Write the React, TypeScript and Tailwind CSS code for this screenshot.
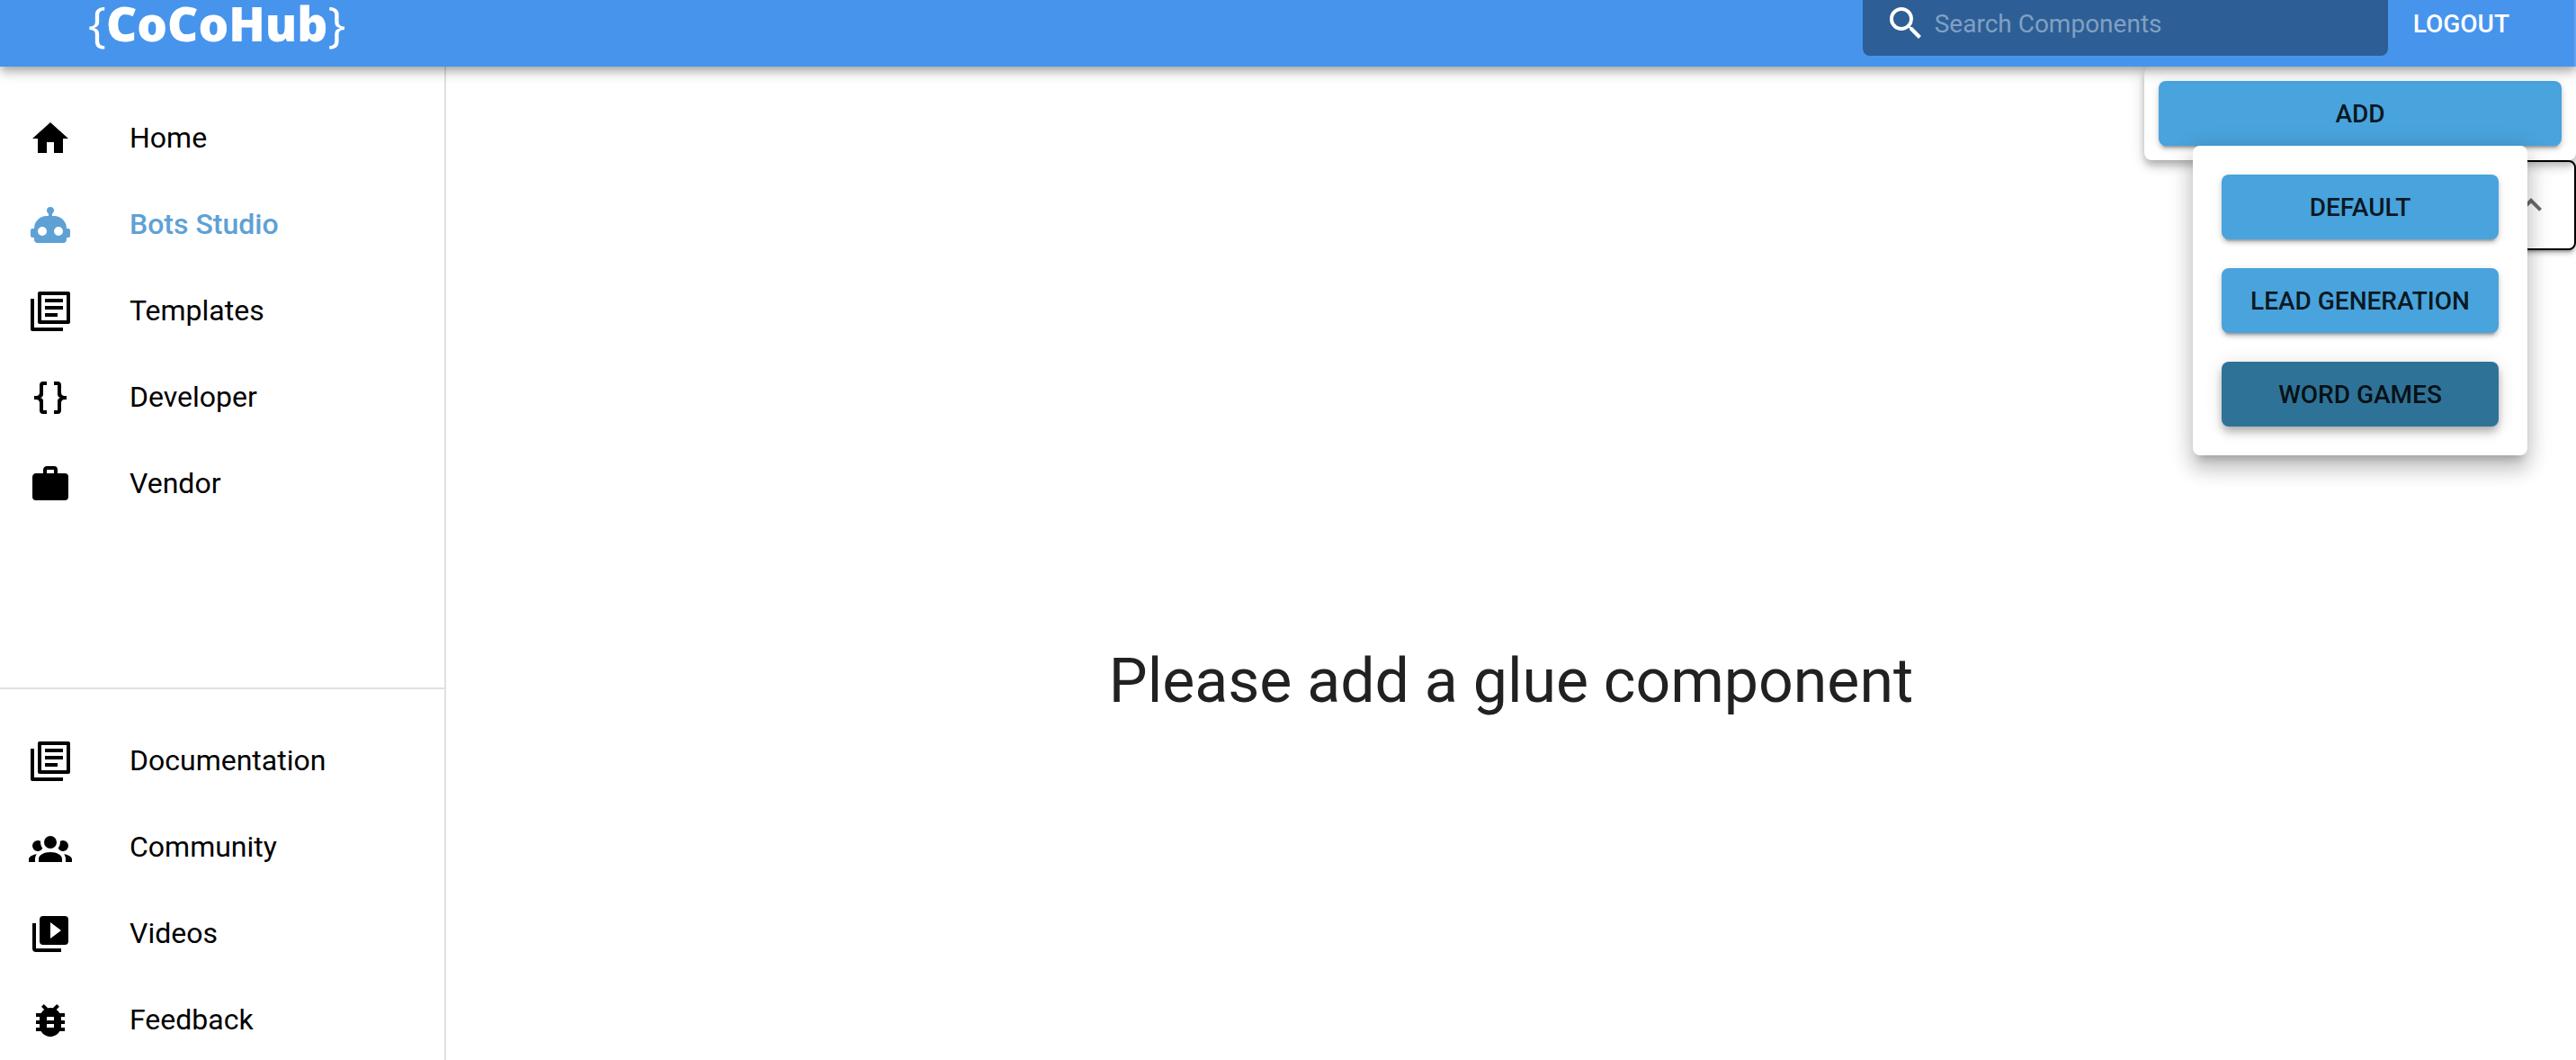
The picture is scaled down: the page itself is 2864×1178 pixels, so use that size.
import { useState } from "react";
import type { ReactNode } from "react";

type Item = { label: string; path: string; active?: boolean };

const paths = {
  home: "M10 20v-6h4v6h5v-8h3L12 3 2 12h3v8z",
  robot:
    "M12 2a2 2 0 0 1 2 2c0 .74-.4 1.39-1 1.73V7h1a7 7 0 0 1 7 7h1a1 1 0 0 1 1 1v3a1 1 0 0 1-1 1h-1v1a2 2 0 0 1-2 2H5a2 2 0 0 1-2-2v-1H2a1 1 0 0 1-1-1v-3a1 1 0 0 1 1-1h1a7 7 0 0 1 7-7h1V5.73c-.6-.34-1-.99-1-1.73a2 2 0 0 1 2-2M7.5 13A2.5 2.5 0 0 0 5 15.5 2.5 2.5 0 0 0 7.5 18a2.5 2.5 0 0 0 2.5-2.5A2.5 2.5 0 0 0 7.5 13m9 0a2.5 2.5 0 0 0-2.5 2.5 2.5 2.5 0 0 0 2.5 2.5 2.5 2.5 0 0 0 2.5-2.5 2.5 2.5 0 0 0-2.5-2.5z",
  pages:
    "M6 1h16a1 1 0 0 1 1 1v16a1 1 0 0 1-1 1H6a1 1 0 0 1-1-1V2a1 1 0 0 1 1-1m1 2v14h14V3H7M9 5h10v2H9V5m0 4h10v2H9V9m0 4h7v2H9v-2M1 5h2v16h16v2H2a1 1 0 0 1-1-1V5z",
  braces:
    "M8 3a2 2 0 0 0-2 2v4a2 2 0 0 1-2 2H3v2h1a2 2 0 0 1 2 2v4a2 2 0 0 0 2 2h2v-2H8v-5a2 2 0 0 0-2-2 2 2 0 0 0 2-2V5h2V3M16 3a2 2 0 0 1 2 2v4a2 2 0 0 0 2 2h1v2h-1a2 2 0 0 0-2 2v4a2 2 0 0 1-2 2h-2v-2h2v-5a2 2 0 0 1 2-2 2 2 0 0 1-2-2V5h-2V3h2z",
  briefcase:
    "M10 2h4a2 2 0 0 1 2 2v2h4a2 2 0 0 1 2 2v11a2 2 0 0 1-2 2H4a2 2 0 0 1-2-2V8c0-1.11.89-2 2-2h4V4c0-1.11.89-2 2-2m4 4V4h-4v2h4z",
  group:
    "M12 5.5A3.5 3.5 0 0 1 15.5 9a3.5 3.5 0 0 1-3.5 3.5A3.5 3.5 0 0 1 8.5 9 3.5 3.5 0 0 1 12 5.5M5 8c.56 0 1.08.15 1.53.42-.15 1.43.27 2.85 1.13 3.96C7.16 13.34 6.16 14 5 14a3 3 0 0 1-3-3 3 3 0 0 1 3-3m14 0a3 3 0 0 1 3 3 3 3 0 0 1-3 3c-1.16 0-2.16-.66-2.66-1.62a5.54 5.54 0 0 0 1.13-3.96c.45-.27.97-.42 1.53-.42M5.5 18.25c0-2.07 2.91-3.75 6.5-3.75s6.5 1.68 6.5 3.75V20h-13v-1.75M0 20v-1.5c0-1.39 1.89-2.56 4.45-2.9-.59.68-.95 1.62-.95 2.65V20H0m24 0h-3.5v-1.75c0-1.03-.36-1.97-.95-2.65 2.56.34 4.45 1.51 4.45 2.9V20z",
  video:
    "M4 6H2v14a2 2 0 0 0 2 2h14v-2H4V6m16-4H8a2 2 0 0 0-2 2v12a2 2 0 0 0 2 2h12a2 2 0 0 0 2-2V4a2 2 0 0 0-2-2m-8 12.5v-9l6 4.5-6 4.5z",
  bug: "M20 8h-2.81a5.985 5.985 0 0 0-1.82-1.96L17 4.41 15.59 3l-2.17 2.17a6.002 6.002 0 0 0-2.83 0L8.41 3 7 4.41l1.62 1.63C7.88 6.55 7.26 7.22 6.81 8H4v2h2.09c-.05.33-.09.66-.09 1v1H4v2h2v1c0 .34.04.67.09 1H4v2h2.81c1.04 1.79 2.97 3 5.19 3s4.15-1.21 5.19-3H20v-2h-2.09c.05-.33.09-.66.09-1v-1h2v-2h-2v-1c0-.34-.04-.67-.09-1H20V8zm-6 8h-4v-2h4v2zm0-4h-4v-2h4v2z",
  search:
    "M15.5 14h-.79l-.28-.27A6.471 6.471 0 0 0 16 9.5 6.5 6.5 0 1 0 9.5 16c1.61 0 3.09-.59 4.23-1.57l.27.28v.79l5 4.99L20.49 19l-4.99-5zm-6 0C7.01 14 5 11.99 5 9.5S7.01 5 9.5 5 14 7.01 14 9.5 11.99 14 9.5 14z",
  chevronUp: "M7.41 15.41 12 10.83l4.59 4.58L18 14l-6-6-6 6z",
};

const mainItems: Item[] = [
  { label: "Home", path: paths.home },
  { label: "Bots Studio", path: paths.robot, active: true },
  { label: "Templates", path: paths.pages },
  { label: "Developer", path: paths.braces },
  { label: "Vendor", path: paths.briefcase },
];

const helpItems: Item[] = [
  { label: "Documentation", path: paths.pages },
  { label: "Community", path: paths.group },
  { label: "Videos", path: paths.video },
  { label: "Feedback", path: paths.bug },
];

const raised =
  "shadow-[0_6px_2px_-4px_rgba(0,0,0,0.2),0_4px_4px_0_rgba(0,0,0,0.14),0_2px_10px_0_rgba(0,0,0,0.12)]";
const lifted =
  "shadow-[0_4px_8px_-2px_rgba(0,0,0,0.2),0_8px_10px_0_rgba(0,0,0,0.14),0_2px_20px_0_rgba(0,0,0,0.12)]";

function Icon({ d }: { d: string }) {
  return (
    <svg viewBox="0 0 24 24" fill="currentColor" fillRule="evenodd" aria-hidden="true" className="size-12 shrink-0">
      <path d={d} />
    </svg>
  );
}

function NavList({ items, label }: { items: Item[]; label: string }) {
  return (
    <nav aria-label={label} className="flex flex-col">
      {items.map((item) => (
        <a
          key={item.label}
          href="#"
          aria-current={item.active ? "page" : undefined}
          className={`flex h-24 items-center gap-16 px-8 text-[32px] ${item.active ? "font-medium text-[#5ea1d5]" : "text-black"}`}
        >
          <Icon d={item.path} />
          <span className="pb-0.5">{item.label}</span>
        </a>
      ))}
    </nav>
  );
}

function ActionButton({ children, pressed = false }: { children: ReactNode; pressed?: boolean }) {
  return (
    <button
      type="button"
      className={`flex h-18 w-full items-center justify-center rounded-lg px-8 pt-0.5 text-[28px] font-medium whitespace-nowrap text-black/87 ${
        pressed ? `bg-[#2f7297] ${lifted}` : `bg-[#49a3dc] ${raised}`
      }`}
    >
      {children}
    </button>
  );
}

export default function App() {
  const [query, setQuery] = useState("");

  return (
    <div className="flex h-screen flex-col overflow-hidden bg-white font-[Roboto,sans-serif] text-[#212121]">
      <header
        className={`relative z-20 flex h-[74px] shrink-0 items-start border-r-2 border-[#62a4f0] bg-[#4794ed] ${lifted}`}
      >
        <a
          href="#"
          className="flex h-[50px] items-center pl-[98px] font-['Open_Sans',sans-serif] text-[53px] leading-none text-white"
        >
          <span>{"{"}</span>
          <span className="font-extrabold">CoCoHub</span>
          <span>{"}"}</span>
        </a>
        <label className="ml-auto flex h-[62px] w-[584px] items-start gap-2 rounded-b-lg bg-[#2d5e96] px-6 pt-0.5 text-white">
          <Icon d={paths.search} />
          <input
            type="text"
            value={query}
            onChange={(e) => setQuery(e.target.value)}
            aria-label="Search Components"
            placeholder="Search Components"
            className="h-12 min-w-0 flex-1 bg-transparent text-[28px] outline-none placeholder:text-[#81a0c2]"
          />
        </label>
        <button type="button" className="mr-18 ml-7 h-[54px] text-[28px] font-medium text-white">
          LOGOUT
        </button>
      </header>

      <div className="flex min-h-0 flex-1">
        <aside className="flex w-[496px] shrink-0 flex-col border-r-2 border-[#e0e0e0]">
          <div className="h-[692px] shrink-0 border-b-2 border-[#e0e0e0] pt-8">
            <NavList items={mainItems} label="Main" />
          </div>
          <div className="pt-8">
            <NavList items={helpItems} label="Help" />
          </div>
        </aside>

        <main className="relative flex min-w-0 flex-1 justify-center">
          <h1 className="pt-[649px] text-[68px] leading-none">Please add a glue component</h1>

          <div className="absolute top-0 right-0 flex w-[480px] flex-col items-end">
            <div className={`relative z-10 w-full rounded-lg bg-white p-4 ${lifted}`}>
              <ActionButton>ADD</ActionButton>
              <div
                role="menu"
                className="absolute top-[88px] left-[54px] flex w-[372px] flex-col gap-8 rounded-lg bg-white p-8 shadow-[0_10px_10px_-6px_rgba(0,0,0,0.2),0_16px_20px_2px_rgba(0,0,0,0.14),0_6px_28px_4px_rgba(0,0,0,0.12)]"
              >
                <ActionButton>DEFAULT</ActionButton>
                <ActionButton>LEAD GENERATION</ActionButton>
                <ActionButton pressed>WORD GAMES</ActionButton>
              </div>
            </div>
            <button
              type="button"
              aria-label="Collapse"
              className={`flex h-[100px] w-96 items-center justify-end rounded-lg border-2 border-black bg-white px-6 text-[#6b6b6b] ${raised}`}
            >
              <Icon d={paths.chevronUp} />
            </button>
          </div>
        </main>
      </div>
    </div>
  );
}
